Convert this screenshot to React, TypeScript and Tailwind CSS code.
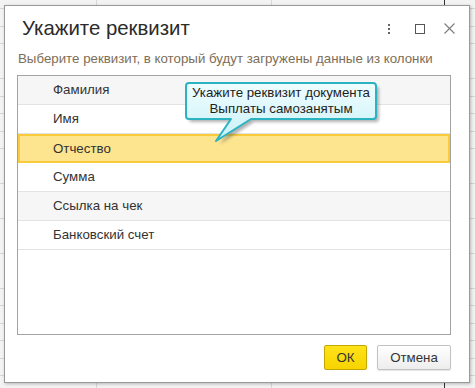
/**
 * Диалог "Укажите реквизит" поверх листа таблицы.
 */
const rows = ["Фамилия", "Имя", "Отчество", "Сумма", "Ссылка на чек", "Банковский счет"];
const selected = 2;

function Callout() {
    return (
        <div className="absolute left-[175px] top-[74px] w-[205px] h-[66px] pointer-events-none">
            <svg width="205" height="66" className="absolute left-0 top-0">
                <defs>
                    <linearGradient id="cg" x1="0" y1="0" x2="0" y2="1">
                        <stop offset="0" stopColor="#effdff" />
                        <stop offset="1" stopColor="#c9f1f8" />
                    </linearGradient>
                    <filter id="blur" x="-10%" y="-10%" width="130%" height="140%">
                        <feGaussianBlur stdDeviation="1.5" />
                    </filter>
                </defs>
                <path
                    d="M12 6 H196 Q199 6 199 9 V39 Q199 42 196 42 H74 L40 64 L56 42 H12 Q9 42 9 39 V9 Q9 6 12 6 Z"
                    fill="#555"
                    opacity="0.45"
                    filter="url(#blur)"
                />
                <path
                    d="M9 3 H193 Q196 3 196 6 V36 Q196 39 193 39 H71 L36 61 L51 39 H9 Q6 39 6 36 V6 Q6 3 9 3 Z"
                    fill="url(#cg)"
                    stroke="#2bb3c2"
                    strokeWidth="2"
                    strokeLinejoin="round"
                />
            </svg>
            <div className="absolute left-[6px] top-[5px] w-[190px] text-center text-[13.3px] leading-[16px] text-[#1e1e1e]">
                Укажите реквизит документа
                <br />
                Выплаты самозанятым
            </div>
        </div>
    );
}

export default function App() {
    return (
        <div
            className="relative h-[388px] w-[475px] overflow-hidden bg-[#f3f3f3] pl-[4px] pt-[5px]"
            style={{ fontFamily: '"Liberation Sans", Arial, sans-serif' }}
        >
            {/* sheet grid behind the dialog */}
            <div className="absolute inset-0 bg-[repeating-linear-gradient(to_bottom,transparent_0px,transparent_8px,#d6d6d6_8px,#d6d6d6_9px,transparent_9px,transparent_17.5px)]" />
            <div className="absolute top-0 bottom-0 left-[96px] w-px bg-[#d6d6d6]" />
            <div className="absolute top-0 bottom-0 left-[271px] w-px bg-[#d6d6d6]" />
            <div className="absolute top-0 bottom-0 left-[444px] w-px bg-[#333]" />

            <div className="relative flex h-[378px] w-[466px] flex-col border border-[#9a9a9a] bg-white shadow-[1px_1px_3px_rgba(0,0,0,0.25)]">
                {/* Title */}
                <div className="flex items-center pl-[17px] pr-[14px] pt-[10px]">
                    <h1 className="flex-1 text-[20.4px] leading-[24px] text-[#2b2b2b]">Укажите реквизит</h1>
                    <div className="flex items-center pt-[1px]">
                        <div className="flex flex-col gap-[2px]">
                            <span className="block h-[2px] w-[2px] bg-[#666]" />
                            <span className="block h-[2px] w-[2px] bg-[#666]" />
                            <span className="block h-[2px] w-[2px] bg-[#666]" />
                        </div>
                        <span className="ml-[25px] block h-[10px] w-[10px] border border-[#555]" />
                        <svg width="11" height="11" viewBox="0 0 11 11" className="ml-[19px]">
                            <path d="M0.5 0.5 L10.5 10.5 M10.5 0.5 L0.5 10.5" stroke="#7a7a7a" strokeWidth="1.1" />
                        </svg>
                    </div>
                </div>

                <p className="mt-[11px] pl-[13px] text-[13.3px] leading-[16px] text-[#7d6e58]">
                    Выберите реквизит, в который будут загружены данные из колонки
                </p>

                {/* List */}
                <div className="mt-[8px] ml-[12px] h-[260px] w-[434px] border border-[#a3a3a3] bg-white">
                    {rows.map((r, i) => (
                        <div
                            key={r}
                            className={
                                i === selected
                                    ? "flex h-[29px] items-center border-2 border-[#f9cb3a] bg-[#fde48f] pl-[33px] text-[13.3px] text-[#333]"
                                    : i % 2 === 0
                                      ? "flex h-[29px] items-center border-b border-[#e3e3e3] bg-[#f6f6f6] pl-[35px] text-[13.3px] text-[#333]"
                                      : "flex h-[29px] items-center border-b border-[#e3e3e3] bg-white pl-[35px] text-[13.3px] text-[#333]"
                            }
                        >
                            {r}
                        </div>
                    ))}
                </div>

                {/* Buttons */}
                <div className="mt-[10px] flex justify-end gap-[10px] pr-[18px]">
                    <button className="h-[25px] w-[43px] rounded-[2px] border border-[#c4a600] bg-[linear-gradient(#ffe21a,#f7d400)] text-[13.3px] text-[#333]">
                        ОК
                    </button>
                    <button className="h-[25px] w-[74px] rounded-[2px] border border-[#c2c2c2] bg-[linear-gradient(#ffffff,#ededed)] text-[13.3px] text-[#333] shadow-[0_1px_1px_rgba(0,0,0,0.1)]">
                        Отмена
                    </button>
                </div>

                <Callout />
            </div>
        </div>
    );
}
